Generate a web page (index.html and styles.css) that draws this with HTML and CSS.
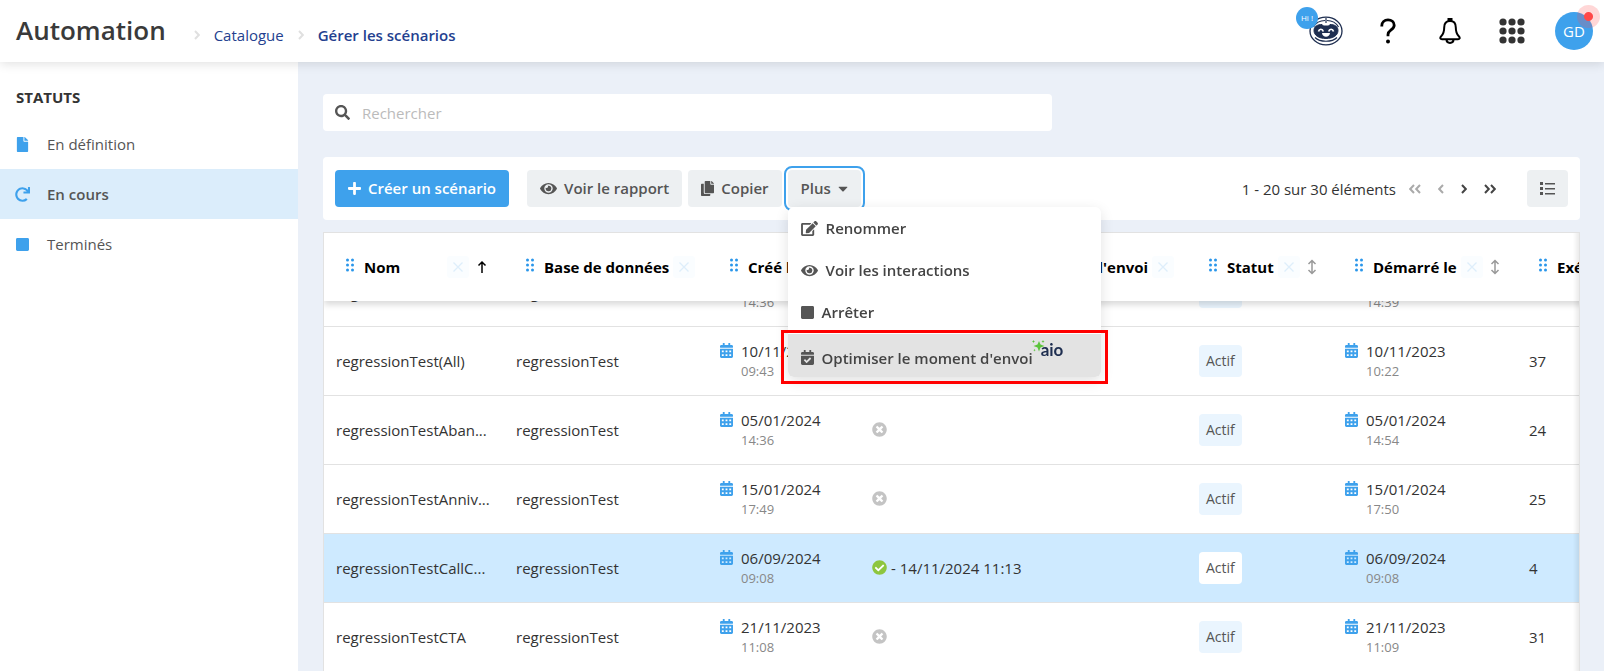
FILE: index.html
```html
<!DOCTYPE html>
<html lang="fr">
<head>
<meta charset="utf-8">
<title>Automation - Gérer les scénarios</title>
<link rel="stylesheet" href="styles.css">
</head>
<body>
<svg class="sprite" aria-hidden="true">
  <symbol id="plus" viewBox="0 0 448 512"><path d="M416 208H272V64c0-17.67-14.33-32-32-32h-32c-17.67 0-32 14.33-32 32v144H32c-17.67 0-32 14.33-32 32v32c0 17.67 14.33 32 32 32h144v144c0 17.67 14.33 32 32 32h32c17.67 0 32-14.33 32-32V304h144c17.67 0 32-14.33 32-32v-32c0-17.67-14.33-32-32-32z"/></symbol>
  <symbol id="eye" viewBox="0 0 576 512"><path d="M572.52 241.4C518.29 135.59 410.93 64 288 64S57.68 135.64 3.48 241.41a32.35 32.35 0 0 0 0 29.19C57.71 376.41 165.07 448 288 448s230.32-71.64 284.52-177.41a32.35 32.35 0 0 0 0-29.19zM288 400a144 144 0 1 1 144-144 143.93 143.93 0 0 1-144 144zm0-240a95.31 95.31 0 0 0-25.31 3.79 47.85 47.85 0 0 1-66.9 66.9A95.78 95.78 0 1 0 288 160z"/></symbol>
  <symbol id="search" viewBox="0 0 512 512"><path d="M505 442.7L405.3 343c-4.5-4.5-10.6-7-17-7H372c27.6-35.3 44-79.7 44-128C416 93.1 322.9 0 208 0S0 93.1 0 208s93.1 208 208 208c48.3 0 92.7-16.4 128-44v16.3c0 6.4 2.5 12.5 7 17l99.7 99.7c9.4 9.4 24.6 9.4 33.9 0l28.3-28.3c9.4-9.4 9.4-24.6.1-34zM208 336c-70.7 0-128-57.2-128-128 0-70.7 57.2-128 128-128 70.7 0 128 57.2 128 128 0 70.7-57.2 128-128 128z"/></symbol>
  <symbol id="copy" viewBox="0 0 448 512"><path d="M320 448v40c0 13.255-10.745 24-24 24H24c-13.255 0-24-10.745-24-24V120c0-13.255 10.745-24 24-24h72v296c0 30.879 25.121 56 56 56h168zm0-344V0H152c-13.255 0-24 10.745-24 24v368c0 13.255 10.745 24 24 24h272c13.255 0 24-10.745 24-24V128H344c-13.2 0-24-10.8-24-24zm120.971-31.029L375.029 7.029A24 24 0 0 0 358.059 0H352v96h96v-6.059a24 24 0 0 0-7.029-16.97z"/></symbol>
  <symbol id="caret" viewBox="0 0 320 512"><path d="M31.3 192h257.3c17.8 0 26.7 21.5 14.1 34.1L174.1 354.8c-7.8 7.8-20.5 7.8-28.3 0L17.2 226.1C4.6 213.5 13.5 192 31.3 192z"/></symbol>
  <symbol id="edit" viewBox="0 0 576 512"><path d="M402.6 83.2l90.2 90.2c3.8 3.8 3.8 10 0 13.8L274.4 405.6l-92.8 10.3c-12.4 1.4-22.9-9.1-21.5-21.5l10.3-92.8L388.8 83.2c3.8-3.8 10-3.8 13.8 0zm162-22.9l-48.8-48.8c-15.2-15.2-39.9-15.2-55.2 0l-35.4 35.4c-3.8 3.8-3.8 10 0 13.8l90.2 90.2c3.8 3.8 10 3.8 13.8 0l35.4-35.4c15.2-15.3 15.2-40 0-55.2zM384 346.2V448H64V128h229.8c3.2 0 6.2-1.3 8.5-3.5l40-40c7.6-7.6 2.2-20.5-8.5-20.5H48C21.5 64 0 85.5 0 112v352c0 26.5 21.5 48 48 48h352c26.5 0 48-21.5 48-48V306.2c0-10.7-12.9-16-20.5-8.5l-40 40c-2.2 2.3-3.5 5.3-3.5 8.5z"/></symbol>
  <symbol id="square" viewBox="0 0 448 512"><path d="M400 32H48C21.5 32 0 53.5 0 80v352c0 26.5 21.5 48 48 48h352c26.5 0 48-21.5 48-48V80c0-26.5-21.5-48-48-48z"/></symbol>
  <symbol id="cal-check" viewBox="0 0 448 512"><path d="M436 160H12c-6.627 0-12-5.373-12-12v-36c0-26.51 21.49-48 48-48h48V12c0-6.627 5.373-12 12-12h40c6.627 0 12 5.373 12 12v52h128V12c0-6.627 5.373-12 12-12h40c6.627 0 12 5.373 12 12v52h48c26.51 0 48 21.49 48 48v36c0 6.627-5.373 12-12 12zM12 192h424c6.627 0 12 5.373 12 12v260c0 26.51-21.49 48-48 48H48c-26.51 0-48-21.49-48-48V204c0-6.627 5.373-12 12-12zm333.296 95.947l-28.169-28.398c-4.667-4.705-12.265-4.736-16.97-.068L194.12 364.665l-45.98-46.352c-4.667-4.705-12.266-4.736-16.971-.068l-28.397 28.17c-4.705 4.667-4.736 12.265-.068 16.97l82.601 83.269c4.667 4.705 12.265 4.736 16.97.068l142.953-141.805c4.705-4.667 4.736-12.265.068-16.97z"/></symbol>
  <symbol id="cal" viewBox="0 0 448 512"><path fill-rule="evenodd" d="M436 160H12c-6.627 0-12-5.373-12-12v-36c0-26.51 21.49-48 48-48h48V12c0-6.627 5.373-12 12-12h40c6.627 0 12 5.373 12 12v52h128V12c0-6.627 5.373-12 12-12h40c6.627 0 12 5.373 12 12v52h48c26.51 0 48 21.49 48 48v36c0 6.627-5.373 12-12 12zM12 192h424c6.627 0 12 5.373 12 12v260c0 26.51-21.49 48-48 48H48c-26.51 0-48-21.49-48-48V204c0-6.627 5.373-12 12-12zM64 256v64h64v-64zM192 256v64h64v-64zM320 256v64h64v-64zM64 384v64h64v-64zM192 384v64h64v-64zM320 384v64h64v-64z"/></symbol>
  <symbol id="off" viewBox="0 0 512 512"><path d="M256 8C119 8 8 119 8 256s111 248 248 248 248-111 248-248S393 8 256 8zm121.6 313.1c4.7 4.7 4.7 12.3 0 17L338 377.6c-4.7 4.7-12.3 4.7-17 0L256 312l-65.1 65.6c-4.7 4.7-12.3 4.7-17 0L134.4 338c-4.7-4.7-4.7-12.3 0-17l65.6-65-65.6-65.1c-4.7-4.7-4.7-12.3 0-17l39.6-39.6c4.7-4.7 12.3-4.7 17 0l65 65.7 65.1-65.6c4.7-4.7 12.3-4.7 17 0l39.6 39.6c4.7 4.7 4.7 12.3 0 17L312 256l65.6 65.1z"/></symbol>
  <symbol id="ok" viewBox="0 0 512 512"><path d="M504 256c0 136.967-111.033 248-248 248S8 392.967 8 256 119.033 8 256 8s248 111.033 248 248z"/><path fill="#fff" d="M227.314 387.314l184-184c6.248-6.248 6.248-16.379 0-22.627l-22.627-22.627c-6.248-6.249-16.379-6.249-22.628 0L216 308.118l-70.059-70.059c-6.248-6.248-16.379-6.248-22.628 0l-22.627 22.627c-6.248 6.248-6.248 16.379 0 22.627l104 104c6.249 6.249 16.379 6.249 22.628.001z"/></symbol>
  <symbol id="redo" viewBox="0 0 512 512"><path d="M500.33 0h-47.41a12 12 0 0 0-12 12.57l4 82.76A247.42 247.42 0 0 0 256 8C119.34 8 7.9 119.53 8 256.19 8.1 393.07 119.1 504 256 504a247.1 247.1 0 0 0 166.18-63.91 12 12 0 0 0 .48-17.43l-34-34a12 12 0 0 0-16.38-.55A176 176 0 1 1 402.1 157.8l-101.53-4.87a12 12 0 0 0-12.57 12v47.41a12 12 0 0 0 12 12h200.33a12 12 0 0 0 12-12V12a12 12 0 0 0-12-12z"/></symbol>
  <symbol id="file" viewBox="0 0 384 512"><path d="M224 136V0H24C10.7 0 0 10.7 0 24v464c0 13.3 10.7 24 24 24h336c13.3 0 24-10.7 24-24V160H248c-13.2 0-24-10.8-24-24zm160-14.1v6.1H256V0h6.1c6.4 0 12.5 2.5 17 7l97.9 98c4.5 4.5 7 10.6 7 16.9z"/></symbol>
  <symbol id="list" viewBox="0 0 15 15"><path d="M0 1h3v3H0zM0 6h3v3H0zM0 11h3v3H0zM5 2h10v1.5H5zM5 7h10v1.5H5zM5 12h10v1.5H5z"/></symbol>
  <symbol id="grip" viewBox="0 0 8 14"><circle cx="1.5" cy="2" r="1.5"/><circle cx="6.5" cy="2" r="1.5"/><circle cx="1.5" cy="7" r="1.5"/><circle cx="6.5" cy="7" r="1.5"/><circle cx="1.5" cy="12" r="1.5"/><circle cx="6.5" cy="12" r="1.5"/></symbol>
  <symbol id="cross" viewBox="0 0 12 12"><path d="M1.5 1.5l9 9M10.5 1.5l-9 9" fill="none" stroke="currentColor" stroke-width="1.3"/></symbol>
  <symbol id="up" viewBox="0 0 18 16"><path d="M9 14V3M5.5 6.5L9 3l3.5 3.5" fill="none" stroke="currentColor" stroke-width="1.5"/></symbol>
  <symbol id="updown" viewBox="0 0 18 16"><path d="M8 1.500v13M4.500 5L8 1.500 11.500 5M4.500 11L8 14.500l3.500-3.500" fill="none" stroke="currentColor" stroke-width="1.5"/></symbol>
  <symbol id="next" viewBox="0 0 6 12"><path d="M1 2l3.800 4L1 10" fill="none" stroke="currentColor" stroke-width="2"/></symbol>
  <symbol id="prev" viewBox="0 0 6 12"><path d="M5 2L1.200 6 5 10" fill="none" stroke="currentColor" stroke-width="2"/></symbol>
  <symbol id="last" viewBox="0 0 12 12"><path d="M1 2l3.800 4L1 10M7 2l3.800 4L7 10" fill="none" stroke="currentColor" stroke-width="2"/></symbol>
  <symbol id="first" viewBox="0 0 12 12"><path d="M5 2L1.200 6 5 10M11 2L7.200 6l3.800 4" fill="none" stroke="currentColor" stroke-width="2"/></symbol>
</svg>

<header class="topbar">
  <h1 class="brand">Automation</h1>
  <nav class="crumbs" aria-label="Fil d'Ariane">
    <svg class="crumb-sep" viewBox="0 0 6 12"><use href="#next"/></svg>
    <a class="crumb" href="#">Catalogue</a>
    <svg class="crumb-sep" viewBox="0 0 6 12"><use href="#next"/></svg>
    <a class="crumb crumb-current" href="#">Gérer les scénarios</a>
  </nav>
  <div class="tools">
    <button class="tool" type="button" aria-label="Assistant">
      <svg width="34" height="30" viewBox="0 0 34 30" fill="none" stroke="#1e2e50">
        <ellipse cx="17" cy="15" rx="16" ry="13.8" stroke-width="1.3"/>
        <path d="M4.500 11C7 6.500 11 4.500 16 4.500M18 4.500c5 0 9 2 11.500 6.500" stroke-width="1.200"/>
        <path d="M17 2v5" stroke-width="1.200"/>
        <path d="M5 14.500c0-4.500 4-6 8-6l1.500 1.500h5l1.500-1.500c4 0 8 1.500 8 6 0 5-5 8-12 8s-12-3-12-8z" fill="#1e2e50" stroke-width="1"/>
        <path d="M6 21.500c5 5 17 5 22 0" stroke-width="1.200"/>
        <path d="M9.500 15.500c.8-3 4-3 4.800 0M19.700 15.500c.8-3 4-3 4.800 0" stroke="#fff" stroke-width="1.700"/>
        <path d="M13 17h8c-.3 2.500-2 3.800-4 3.800s-3.700-1.300-4-3.800z" fill="#fff" stroke="none"/>
      </svg>
      <span class="hi">Hi !</span>
    </button>
    <button class="tool" type="button" aria-label="Aide">
      <svg width="16" height="26" viewBox="0 0 16 26" fill="none" stroke="#000" stroke-width="2.8"><path d="M1.800 8.500V7.800C1.800 4 4.500 1.900 8 1.900s6.200 2.100 6.200 5.300c0 4.600-6.200 4.800-6.200 9.300v1.800"/><circle cx="8" cy="23.500" r="2" fill="#000" stroke="none"/></svg>
    </button>
    <button class="tool" type="button" aria-label="Notifications">
      <svg width="22" height="26" viewBox="0 0 22 26" fill="none" stroke="#000" stroke-width="2"><path d="M9.500 3.200V1h3v2.200M11 3c-4 0-5.800 3-5.800 6.500 0 5-1.200 7-3 8.700C.5 20 1.500 21.200 3 21.200h16c1.500 0 2.500-1.200.8-3-1.800-1.700-3-3.700-3-8.700C16.800 6 15 3 11 3z"/><path d="M7.500 21.500c0 2.300 1.500 3.400 3.500 3.400s3.500-1.100 3.500-3.400"/></svg>
    </button>
    <button class="tool" type="button" aria-label="Applications">
      <svg width="26" height="26" viewBox="0 0 26 26" fill="#333"><circle cx="4" cy="4" r="3.600"/><circle cx="13" cy="4" r="3.600"/><circle cx="22" cy="4" r="3.600"/><circle cx="4" cy="13" r="3.600"/><circle cx="13" cy="13" r="3.600"/><circle cx="22" cy="13" r="3.600"/><circle cx="4" cy="22" r="3.600"/><circle cx="13" cy="22" r="3.600"/><circle cx="22" cy="22" r="3.600"/></svg>
    </button>
    <button class="tool avatar" type="button">GD<span class="alert"></span></button>
  </div>
</header>

<div class="page">
  <aside class="sidebar">
    <h2 class="side-title">STATUTS</h2>
    <nav>
      <a class="side-item" href="#"><svg class="icon" width="13" height="15"><use href="#file"/></svg>En définition</a>
      <a class="side-item active" href="#"><svg class="icon" width="15" height="15"><use href="#redo"/></svg>En cours</a>
      <a class="side-item" href="#"><svg class="icon" width="13" height="15"><use href="#square"/></svg>Terminés</a>
    </nav>
  </aside>

  <main class="content">
    <label class="search"><svg class="icon" width="15" height="15"><use href="#search"/></svg><input type="search" placeholder="Rechercher" aria-label="Rechercher"></label>

    <div class="toolbar">
      <button class="btn primary" type="button"><svg class="icon" width="13" height="15"><use href="#plus"/></svg>Créer un scénario</button>
      <button class="btn" type="button"><svg class="icon" width="17" height="15"><use href="#eye"/></svg>Voir le rapport</button>
      <button class="btn" type="button"><svg class="icon" width="13" height="15"><use href="#copy"/></svg>Copier</button>
      <div class="dropdown">
        <button class="btn open" type="button" aria-expanded="true">Plus<svg class="icon" width="10" height="15"><use href="#caret"/></svg></button>
        <div class="menu">
          <button class="menu-item" type="button"><svg class="icon" width="17" height="15"><use href="#edit"/></svg>Renommer</button>
          <button class="menu-item" type="button"><svg class="icon" width="17" height="15"><use href="#eye"/></svg>Voir les interactions</button>
          <button class="menu-item" type="button"><svg class="icon" width="13" height="15"><use href="#square"/></svg>Arrêter</button>
          <button class="menu-item marked" type="button"><svg class="icon" width="13" height="15"><use href="#cal-check"/></svg>Optimiser le moment d'envoi<span class="aio"><svg class="spark" width="14" height="12" viewBox="0 0 14 12"><path d="M7 1l1.500 3.500L12.500 6 8.500 7.500 7 11.500 5.500 7.500 1.500 6l4-1.500zM1.500 0l.5 1 1 .5-1 .5-.5 1-.5-1-1-.5 1-.5zM11 0l.5 1 1 .5-1 .5-.5 1-.5-1-1-.5 1-.5zM2.500 9l.4.8.8.4-.8.4-.4.8-.4-.8-.8-.4.8-.4z"/></svg>aio</span></button>
        </div>
      </div>
      <div class="pager">
        <span>1 - 20 sur 30 éléments</span>
        <button class="page-btn" type="button" disabled aria-label="Première page"><svg width="12" height="12"><use href="#first"/></svg></button>
        <button class="page-btn" type="button" disabled aria-label="Page précédente"><svg width="6" height="12"><use href="#prev"/></svg></button>
        <button class="page-btn" type="button" aria-label="Page suivante"><svg width="6" height="12"><use href="#next"/></svg></button>
        <button class="page-btn" type="button" aria-label="Dernière page"><svg width="12" height="12"><use href="#last"/></svg></button>
      </div>
      <button class="btn" type="button" aria-label="Affichage"><svg class="icon" width="15" height="15"><use href="#list"/></svg></button>
    </div>

    <div class="grid">
      <div class="scroller" id="scroller">
        <table class="table">
          <colgroup><col class="c-name"><col class="c-base"><col class="c-created"><col class="c-send"><col class="c-status"><col class="c-start"><col class="c-runs"></colgroup>
          <thead>
            <tr>
              <th><div class="head"><svg class="grip"><use href="#grip"/></svg><span class="label">Nom</span><button class="remove" type="button" aria-label="Retirer"><svg width="12" height="12"><use href="#cross"/></svg></button><svg class="sort sorted"><use href="#up"/></svg></div></th>
              <th><div class="head"><svg class="grip"><use href="#grip"/></svg><span class="label">Base de données</span><button class="remove" type="button" aria-label="Retirer"><svg width="12" height="12"><use href="#cross"/></svg></button></div></th>
              <th><div class="head"><svg class="grip"><use href="#grip"/></svg><span class="label">Créé le</span></div></th>
              <th><div class="head"><svg class="grip"><use href="#grip"/></svg><span class="label">Optimisation du moment d'envoi</span><button class="remove" type="button" aria-label="Retirer"><svg width="12" height="12"><use href="#cross"/></svg></button></div></th>
              <th><div class="head"><svg class="grip"><use href="#grip"/></svg><span class="label">Statut</span><button class="remove" type="button" aria-label="Retirer"><svg width="12" height="12"><use href="#cross"/></svg></button><svg class="sort"><use href="#updown"/></svg></div></th>
              <th><div class="head"><svg class="grip"><use href="#grip"/></svg><span class="label">Démarré le</span><button class="remove" type="button" aria-label="Retirer"><svg width="12" height="12"><use href="#cross"/></svg></button><svg class="sort"><use href="#updown"/></svg></div></th>
              <th><div class="head"><svg class="grip"><use href="#grip"/></svg><span class="label">Exécutions</span></div></th>
            </tr>
          </thead>
          <tbody>
            <tr><td>regressionTest</td><td>regressionTest</td><td><div class="date"><svg class="icon" width="13" height="15"><use href="#cal"/></svg><div>05/01/2024<small>14:36</small></div></div></td><td></td><td><span class="badge">Actif</span></td><td><div class="date"><svg class="icon" width="13" height="15"><use href="#cal"/></svg><div>05/01/2024<small>14:39</small></div></div></td><td>12</td></tr>
            <tr><td>regressionTest(All)</td><td>regressionTest</td><td><div class="date"><svg class="icon" width="13" height="15"><use href="#cal"/></svg><div>10/11/2023<small>09:43</small></div></div></td><td></td><td><span class="badge">Actif</span></td><td><div class="date"><svg class="icon" width="13" height="15"><use href="#cal"/></svg><div>10/11/2023<small>10:22</small></div></div></td><td>37</td></tr>
            <tr><td>regressionTestAban...</td><td>regressionTest</td><td><div class="date"><svg class="icon" width="13" height="15"><use href="#cal"/></svg><div>05/01/2024<small>14:36</small></div></div></td><td><div class="state"><svg class="icon off" width="15" height="15"><use href="#off"/></svg></div></td><td><span class="badge">Actif</span></td><td><div class="date"><svg class="icon" width="13" height="15"><use href="#cal"/></svg><div>05/01/2024<small>14:54</small></div></div></td><td>24</td></tr>
            <tr><td>regressionTestAnniv...</td><td>regressionTest</td><td><div class="date"><svg class="icon" width="13" height="15"><use href="#cal"/></svg><div>15/01/2024<small>17:49</small></div></div></td><td><div class="state"><svg class="icon off" width="15" height="15"><use href="#off"/></svg></div></td><td><span class="badge">Actif</span></td><td><div class="date"><svg class="icon" width="13" height="15"><use href="#cal"/></svg><div>15/01/2024<small>17:50</small></div></div></td><td>25</td></tr>
            <tr class="selected"><td>regressionTestCallC...</td><td>regressionTest</td><td><div class="date"><svg class="icon" width="13" height="15"><use href="#cal"/></svg><div>06/09/2024<small>09:08</small></div></div></td><td><div class="state"><svg class="icon ok" width="15" height="15"><use href="#ok"/></svg>- 14/11/2024 11:13</div></td><td><span class="badge">Actif</span></td><td><div class="date"><svg class="icon" width="13" height="15"><use href="#cal"/></svg><div>06/09/2024<small>09:08</small></div></div></td><td>4</td></tr>
            <tr><td>regressionTestCTA</td><td>regressionTest</td><td><div class="date"><svg class="icon" width="13" height="15"><use href="#cal"/></svg><div>21/11/2023<small>11:08</small></div></div></td><td><div class="state"><svg class="icon off" width="15" height="15"><use href="#off"/></svg></div></td><td><span class="badge">Actif</span></td><td><div class="date"><svg class="icon" width="13" height="15"><use href="#cal"/></svg><div>21/11/2023<small>11:09</small></div></div></td><td>31</td></tr>
          </tbody>
        </table>
      </div>
    </div>
  </main>
</div>
<script src="app.js"></script>
</body>
</html>
```
FILE: styles.css
```css
* { box-sizing: border-box; }
body {
  margin: 0;
  height: 100vh;
  display: flex;
  flex-direction: column;
  overflow: hidden;
  background: #ebf0f8;
  color: #333;
  font: 15px/20px "Open Sans", "Noto Sans", sans-serif;
}
button, input { font: inherit; color: inherit; }
button { border: 0; background: none; padding: 0; cursor: pointer; }
a { text-decoration: none; }
.sprite { display: none; }
.icon { flex: none; fill: currentColor; }

.topbar {
  flex: none;
  position: relative;
  z-index: 3;
  display: flex;
  align-items: center;
  height: 62px;
  padding: 0 11px 0 16px;
  background: #fff;
  box-shadow: 0 2px 10px rgba(0, 0, 0, .12);
}
.brand { margin: 0; padding-bottom: 2px; font-size: 26px; line-height: 40px; font-weight: 600; color: #3a3a3a; }
.crumbs { display: flex; align-items: center; gap: 14px; padding: 8px 0 0 28px; }
.crumb-sep { width: 6px; height: 12px; color: #e0e0e0; }
.crumb { color: #243f8f; }
.crumb-current { font-weight: 600; }
.tools { display: flex; align-items: center; gap: 24px; margin-left: auto; }
.tool { display: flex; position: relative; justify-content: center; width: 38px; }
.hi {
  position: absolute;
  left: -11px;
  top: -9px;
  width: 22px;
  height: 22px;
  border-radius: 50%;
  background: #3ea1ec;
  color: #fff;
  font-size: 8px;
  line-height: 22px;
  text-align: center;
}
.avatar {
  height: 38px;
  border-radius: 50%;
  align-items: center;
  background: #3ea1ec;
  color: #fff;
}
.alert {
  position: absolute;
  right: -7px;
  top: -7px;
  width: 23px;
  height: 23px;
  border-radius: 50%;
  background: radial-gradient(circle, #ff4848 4px, rgba(255, 72, 72, .22) 5px);
}

.page { flex: 1; min-height: 0; display: flex; }
.sidebar { flex: none; width: 298px; background: #fff; }
.side-title { margin: 0; padding: 25px 16px 12px; font-size: 15px; line-height: 20px; font-weight: 700; }
.side-item { display: flex; align-items: center; gap: 18px; height: 50px; padding: 0 16px; color: #555; }
.side-item .icon { color: #3ea1ec; }
.side-item.active { padding-left: 15px; gap: 17px; background: #dbedfb; font-weight: 600; }

.content {
  flex: 1;
  min-width: 0;
  display: flex;
  flex-direction: column;
  padding: 32px 24px 0 25px;
}
.search {
  flex: none;
  display: flex;
  align-items: center;
  gap: 12px;
  width: 58%;
  height: 37px;
  padding: 0 12px;
  border-radius: 4px;
  background: #fff;
  color: #555;
}
.search input { flex: 1; border: 0; outline: 0; background: none; padding: 0; }
.search input::placeholder { color: #bbb; }

.toolbar {
  flex: none;
  display: flex;
  align-items: center;
  gap: 6px;
  margin: 26px 0 12px;
  padding: 13px 12px;
  border-radius: 4px;
  background: #fff;
}
.btn {
  display: flex;
  align-items: center;
  gap: 7px;
  height: 37px;
  padding: 0 13px 1px;
  border-radius: 4px;
  background: #edf0f2;
  color: #555;
  font-weight: 600;
}
.primary { margin-right: 12px; background: #3ea1ec; color: #fff; }
.dropdown { position: relative; z-index: 2; }
.open { outline: 2px solid #3ea1ec; outline-offset: 2px; }
.menu {
  position: absolute;
  top: 37px;
  left: 0;
  width: 313px;
  border-radius: 6px;
  background: #fff;
  box-shadow: 0 4px 14px rgba(0, 0, 0, .12);
}
.menu-item {
  position: relative;
  display: flex;
  align-items: center;
  gap: 8px;
  width: 100%;
  height: 42px;
  padding: 0 13px;
  color: #444;
  font-weight: 600;
}
.menu-item .icon { color: #555; }
.marked { height: 43px; margin-top: 1px; padding-top: 4px; border-radius: 0 0 6px 6px; background: #e3e3e3; }
.marked::after {
  content: "";
  position: absolute;
  inset: -4px -7px -7px;
  border: 3px solid #f00;
}
.aio {
  position: relative;
  align-self: flex-start;
  padding-top: 3px;
  color: #1e2e50;
  font: 700 17px/18px Lato, sans-serif;
}
.spark { position: absolute; left: -9px; top: 2px; fill: #5cc43c; }

.pager { display: flex; align-items: center; gap: 17px; margin: 0 25px 0 auto; }
.pager span { margin-right: -4px; }
.page-btn { display: flex; color: #444; }
.page-btn:disabled { color: #aaa; }

.grid {
  flex: 1;
  min-height: 0;
  position: relative;
  border: 1px solid #e2e2e2;
  border-bottom: 0;
  background: #fff;
}
.grid::after {
  content: "";
  position: absolute;
  z-index: 1;
  inset: 0 0 0 auto;
  width: 6px;
  background: linear-gradient(to right, transparent, rgba(0, 0, 0, .08));
}
.scroller { height: 100%; overflow: auto; scrollbar-width: none; }
.table { width: 1343px; table-layout: fixed; border-spacing: 0; }
.c-name { width: 180px; }
.c-base { width: 204px; }
.c-created { width: 152px; }
.c-send { width: 327px; }
.c-status { width: 146px; }
.c-start { width: 184px; }
.c-runs { width: 150px; }
thead { position: sticky; top: 0; z-index: 1; box-shadow: 0 4px 6px rgba(0, 0, 0, .14); }
th {
  height: 68px;
  padding: 0;
  background: #fff;
  color: #000;
  font-weight: 700;
  text-align: left;
}
.head { display: flex; align-items: center; gap: 4px; padding: 0 13px 0 22px; }
.label { flex: 1; padding-left: 6px; white-space: nowrap; }
.grip { flex: none; width: 8px; height: 14px; margin-bottom: 4px; fill: #2a96ea; }
.remove {
  flex: none;
  display: flex;
  align-items: center;
  justify-content: center;
  width: 22px;
  height: 22px;
  border-radius: 3px;
  background: #fafdff;
  color: #deeefb;
}
.sort { flex: none; width: 18px; height: 16px; color: #999; }
.sorted { color: #000; }
td { height: 69px; padding: 0 12px 1px; border-bottom: 1px solid #e2e2e2; white-space: nowrap; }
.selected td { background: #ceeaff; }
.date { display: flex; gap: 8px; padding-top: 1px; }
.date .icon { color: #3ea1ec; margin-top: 2px; }
.date small { display: block; font-size: 13px; color: #888; }
.state { display: flex; align-items: center; gap: 4px; }
.off { color: #c4c4c4; }
.ok { color: #8dc63f; }
.badge {
  display: inline-block;
  padding: 6px 7px;
  border-radius: 4px;
  background: #eaf5fe;
  color: #555;
  font-size: 14px;
}
.selected .badge { background: #fff; }
```
FILE: app.js
```js
// Open the list with its first row scrolled under the sticky header.
document.getElementById("scroller").scrollTop = 43;
```
